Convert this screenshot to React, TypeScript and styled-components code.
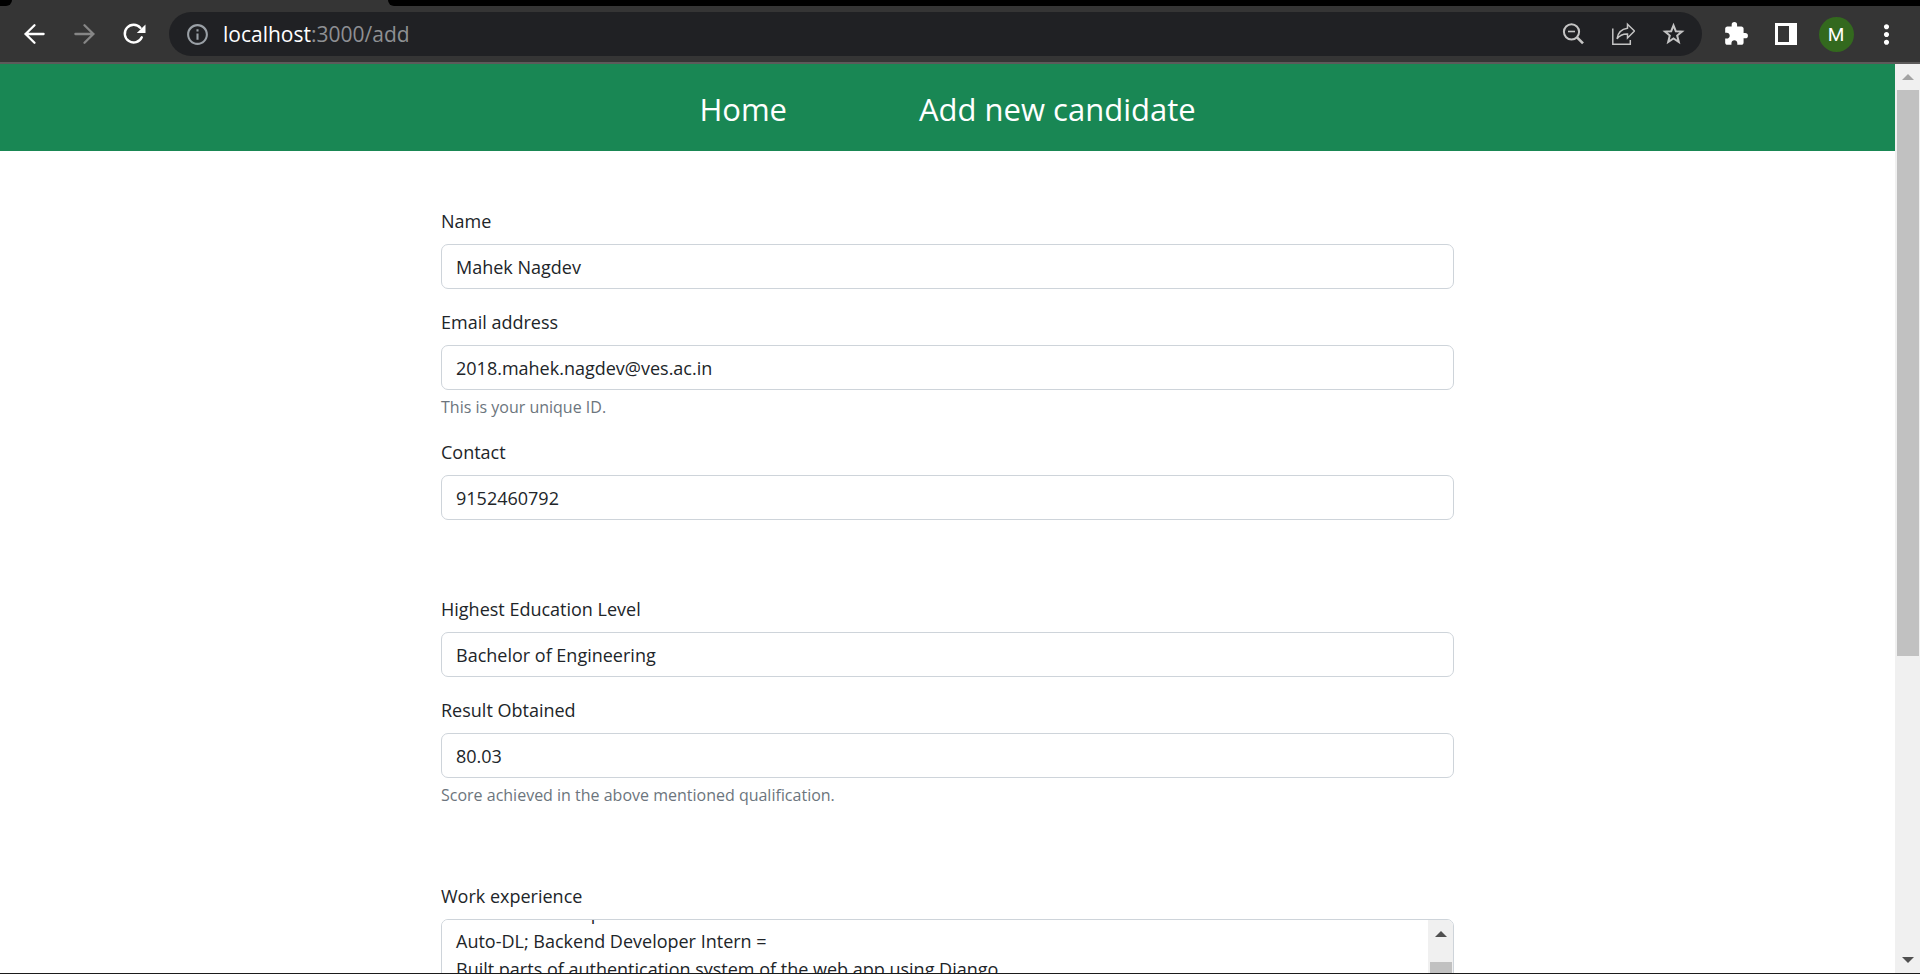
import React, { useLayoutEffect, useRef } from 'react';
import styled, { createGlobalStyle } from 'styled-components';
import { MdExtension, MdInfoOutline, MdMoreVert } from 'react-icons/md';

const GlobalStyle = createGlobalStyle`
  *, *::before, *::after { box-sizing: border-box; }
  body {
    margin: 0;
    overflow: hidden;
    background: #ffffff;
    color: #212529;
    font-family: 'Open Sans', 'Noto Sans', sans-serif;
    font-size: 18px;
  }
`;

const Window = styled.div`
  display: flex;
  flex-direction: column;
  height: 100vh;
  border-bottom: 1px solid #1b1b1b;
`;

const TabStrip = styled.div`
  display: flex;
  flex: none;
  height: 6px;
  background: #353535;
`;

const StripStart = styled.div`
  width: 12px;
  background: #000000;
  border-bottom-right-radius: 6px;
`;

const StripRest = styled.div`
  flex: 1;
  margin-left: 376px;
  background: #000000;
  border-bottom-left-radius: 6px;
`;

const Toolbar = styled.div`
  display: flex;
  flex: none;
  align-items: center;
  height: 58px;
  padding: 0 9px;
  background: #353535;
  border-bottom: 2px solid #5c5a5a;
`;

const ToolButton = styled.button<{ $color?: string }>`
  display: flex;
  flex: none;
  align-items: center;
  justify-content: center;
  width: 50px;
  height: 44px;
  padding: 0;
  border: 0;
  background: none;
  color: ${(p) => p.$color ?? '#ffffff'};
`;

const AddressBar = styled.div`
  display: flex;
  flex: 1;
  align-items: center;
  height: 44px;
  margin: 0 9px 0 10px;
  padding: 0 4px 0 16px;
  border-radius: 22px;
  background: #202124;
`;

const Url = styled.div`
  flex: 1;
  margin-left: 13px;
  color: #8e9093;
  font-size: 21px;
  line-height: 28px;
`;

const Host = styled.span`
  color: #ffffff;
`;

const Avatar = styled.span`
  width: 35px;
  height: 35px;
  border-radius: 50%;
  background: #33691e;
  font-family: Roboto, sans-serif;
  font-size: 19px;
  line-height: 36px;
  text-align: center;
`;

const Viewport = styled.div`
  display: flex;
  flex: 1;
  min-height: 0;
`;

const Page = styled.div`
  flex: 1;
  min-width: 0;
  overflow: hidden;
`;

const Nav = styled.nav`
  display: flex;
  align-items: center;
  justify-content: center;
  gap: 132px;
  height: 87px;
  padding-top: 2px;
  background: #198754;
`;

const NavLink = styled.a`
  color: #ffffff;
  font-size: 31px;
  line-height: 48px;
  text-decoration: none;
`;

const Form = styled.form`
  display: flex;
  flex-direction: column;
  gap: 75px;
  max-width: 1013px;
  margin: 0 auto;
  padding-top: 56px;
`;

const Section = styled.div`
  display: flex;
  flex-direction: column;
  gap: 19px;
`;

const Field = styled.div`
  display: flex;
  flex-direction: column;
`;

const Label = styled.label`
  margin-bottom: 9px;
  line-height: 28px;
`;

const Input = styled.input`
  width: 100%;
  height: 45px;
  padding: 0 14px;
  border: 1px solid #ced4da;
  border-radius: 7px;
  background: #ffffff;
  color: #212529;
  font: inherit;
`;

const Help = styled.small`
  margin-top: 5px;
  color: #6c757d;
  font-size: 16px;
  line-height: 24px;
`;

const TextBox = styled.div`
  display: flex;
  overflow: hidden;
  border: 1px solid #ced4da;
  border-radius: 7px;
`;

const TextArea = styled.textarea`
  flex: 1;
  padding: 7px 14px;
  border: 0;
  overflow: hidden;
  resize: none;
  background: #ffffff;
  color: #212529;
  font: inherit;
  line-height: 28px;
`;

const ScrollTrack = styled.div`
  display: flex;
  flex: none;
  flex-direction: column;
  width: 25px;
  padding: 0 1px 0 2px;
  background: #f0f0f0;
`;

const ScrollArrow = styled.div<{ $down?: boolean; $dim?: boolean; $tall?: boolean }>`
  display: flex;
  flex: none;
  align-items: center;
  justify-content: center;
  height: ${(p) => (p.$tall ? 42 : 26)}px;
  padding-bottom: ${(p) => (p.$tall ? 14 : 0)}px;

  &::before {
    content: '';
    border: 6px solid transparent;
    border-width: ${(p) => (p.$down ? '6px 6px 0' : '0 6px 6px')};
    border-${(p) => (p.$down ? 'top' : 'bottom')}-color: ${(p) => (p.$dim ? '#a3a3a3' : '#505050')};
  }
`;

const ScrollRail = styled.div`
  flex: 1;
`;

const ScrollThumb = styled.div<{ $share: number }>`
  height: ${(p) => p.$share}%;
  background: #c1c1c1;
`;

function ArrowIcon({ flip = false }: { flip?: boolean }) {
  return (
    <svg width="22" height="22" viewBox="0 0 22 22" fill="none" stroke="currentColor" strokeWidth="2.3" strokeLinecap="round">
      <path d={flip ? 'M2.400 11H20.400M11.500 2.200L20.400 11L11.500 19.800' : 'M20.600 11H2.600M11.500 2.200L2.600 11L11.500 19.800'} />
    </svg>
  );
}

function ReloadIcon() {
  return (
    <svg width="24" height="24" viewBox="0 0 24 24" fill="none">
      <path d="M19.800 15.300A8.900 8.900 0 1 1 18.500 5.900" stroke="currentColor" strokeWidth="2.400" strokeLinecap="round" />
      <path d="M23.500 2.400V11H14.800Z" fill="currentColor" />
    </svg>
  );
}

function ZoomOutIcon() {
  return (
    <svg width="22" height="22" viewBox="0 0 22 22" fill="none" stroke="currentColor" strokeWidth="2">
      <circle cx="9.500" cy="8.800" r="7.600" />
      <path d="M6 8.500H13" strokeWidth="1.600" />
      <path d="M15 14.300L21 20.300" strokeWidth="2.600" />
    </svg>
  );
}

function ShareIcon() {
  return (
    <svg width="24" height="24" viewBox="0 0 24 24" fill="none" stroke="currentColor" strokeWidth="1.500">
      <path d="M1.800 6.500V22.200H19.300V18" />
      <path d="M16.500 2.200L23.500 9L16.500 16V11.900C12 11.700 8.800 13 6 16.800C6.800 10.900 10.500 7 16.500 6.200Z" />
    </svg>
  );
}

function StarIcon() {
  return (
    <svg width="24" height="24" viewBox="0 0 24 24" fill="none" stroke="currentColor" strokeWidth="2">
      <path d="M12.500 3.400L14.800 9.200L21 9.600L16.200 13.600L17.800 20L12.500 16.500L7.200 20L8.800 13.600L4 9.600L10.200 9.200Z" />
    </svg>
  );
}

function SidePanelIcon() {
  return (
    <svg width="22" height="22" viewBox="0 0 22 22">
      <path fill="currentColor" fillRule="evenodd" d="M0 0H22V22H0ZM3 3V19H14V3Z" />
    </svg>
  );
}

interface TextFieldProps {
  id: string;
  label: string;
  value: string;
  type?: string;
  help?: string;
}

function TextField({ id, label, value, type = 'text', help }: TextFieldProps) {
  return (
    <Field>
      <Label htmlFor={id}>{label}</Label>
      <Input id={id} type={type} defaultValue={value} aria-describedby={help ? `${id}-help` : undefined} />
      {help && <Help id={`${id}-help`}>{help}</Help>}
    </Field>
  );
}

const experience = [
  'Software development',
  'Auto-DL; Backend Developer Intern =',
  'Built parts of authentication system of the web app using Django',
].join('\n');

function ExperienceField() {
  const ref = useRef<HTMLTextAreaElement>(null);

  useLayoutEffect(() => {
    if (ref.current) ref.current.scrollTop = ref.current.scrollHeight;
  }, []);

  return (
    <Field>
      <Label htmlFor="experience">Work experience</Label>
      <TextBox>
        <TextArea id="experience" ref={ref} rows={2} defaultValue={experience} />
        <ScrollTrack>
          <ScrollArrow $tall />
          <ScrollRail>
            <ScrollThumb $share={100} />
          </ScrollRail>
        </ScrollTrack>
      </TextBox>
    </Field>
  );
}

export default function App() {
  return (
    <Window>
      <GlobalStyle />
      <TabStrip>
        <StripStart />
        <StripRest />
      </TabStrip>
      <Toolbar>
        <ToolButton aria-label="Back"><ArrowIcon /></ToolButton>
        <ToolButton aria-label="Forward" $color="#868686"><ArrowIcon flip /></ToolButton>
        <ToolButton aria-label="Reload"><ReloadIcon /></ToolButton>
        <AddressBar>
          <MdInfoOutline size={25} color="#9aa0a6" />
          <Url><Host>localhost</Host>:3000/add</Url>
          <ToolButton aria-label="Zoom" $color="#c4c4c4"><ZoomOutIcon /></ToolButton>
          <ToolButton aria-label="Share" $color="#c4c4c4"><ShareIcon /></ToolButton>
          <ToolButton aria-label="Bookmark" $color="#c4c4c4"><StarIcon /></ToolButton>
        </AddressBar>
        <ToolButton aria-label="Extensions"><MdExtension size={26} /></ToolButton>
        <ToolButton aria-label="Side panel"><SidePanelIcon /></ToolButton>
        <ToolButton aria-label="Profile"><Avatar>M</Avatar></ToolButton>
        <ToolButton aria-label="Menu"><MdMoreVert size={31} /></ToolButton>
      </Toolbar>
      <Viewport>
        <Page>
          <Nav>
            <NavLink href="/">Home</NavLink>
            <NavLink href="/add">Add new candidate</NavLink>
          </Nav>
          <Form>
            <Section>
              <TextField id="name" label="Name" value="Mahek Nagdev" />
              <TextField id="email" type="email" label="Email address" value="2018.mahek.nagdev@ves.ac.in" help="This is your unique ID." />
              <TextField id="contact" type="tel" label="Contact" value="9152460792" />
            </Section>
            <Section>
              <TextField id="education" label="Highest Education Level" value="Bachelor of Engineering" />
              <TextField id="result" label="Result Obtained" value="80.03" help="Score achieved in the above mentioned qualification." />
            </Section>
            <Section>
              <ExperienceField />
            </Section>
          </Form>
        </Page>
        <ScrollTrack>
          <ScrollArrow $dim />
          <ScrollRail>
            <ScrollThumb $share={66} />
          </ScrollRail>
          <ScrollArrow $down />
        </ScrollTrack>
      </Viewport>
    </Window>
  );
}
